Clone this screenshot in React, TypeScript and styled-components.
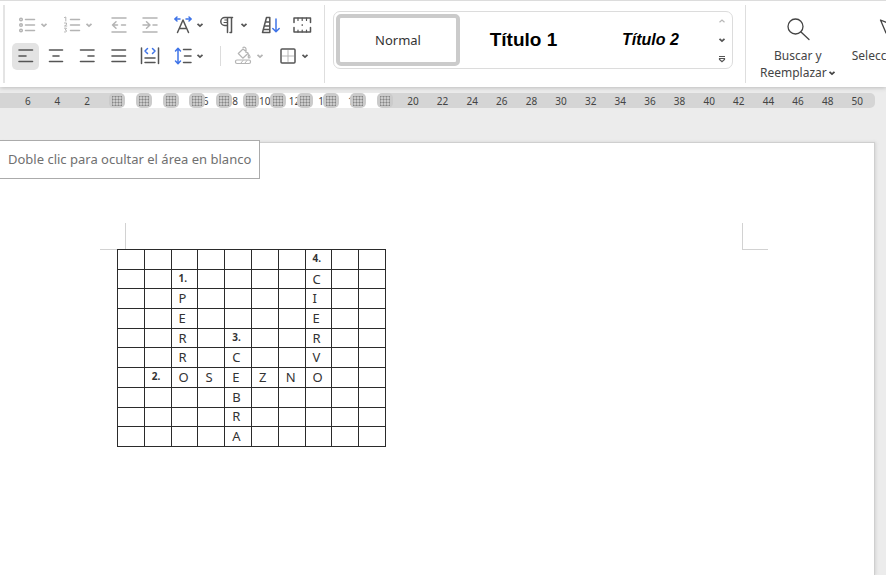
import React from "react";
import styled, { createGlobalStyle } from "styled-components";

const GlobalStyle = createGlobalStyle`
  *, *::before, *::after { box-sizing: border-box; }
  html, body, #root { height: 100%; }
  body {
    margin: 0;
    background: #ececec;
    font-family: "Noto Sans", "Open Sans", sans-serif;
    font-size: 12px;
    color: #444;
    overflow: hidden;
  }
  button { font: inherit; color: inherit; }
  svg { display: block; flex: none; }
`;

const Shell = styled.div`
  display: flex;
  flex-direction: column;
  min-height: 100%;
`;

const Ribbon = styled.header`
  display: flex;
  align-items: stretch;
  height: 87px;
  padding: 4px 0 4px 3px;
  background: #fff;
  border-top: 1px solid #dcdcdc;
  box-shadow: 0 1px 4px #bdbdbd;
  overflow: hidden;
  position: relative;
`;

const ParagraphGroup = styled.div`
  flex: none;
  width: 322px;
  display: flex;
  flex-direction: column;
  gap: 3px;
  padding: 6px 0 0 8px;
  border-left: 2px solid #e4e4e4;
  border-right: 1px solid #dedede;
`;

const ToolRow = styled.div<{ $columns: string; $indent?: boolean }>`
  display: grid;
  grid-template-columns: ${(p) => p.$columns};
  align-items: center;
  justify-items: start;
  height: 28px;
  padding-left: ${(p) => (p.$indent ? "5px" : "0")};
  margin-left: -1px;
`;

const ToolButton = styled.button<{ $active?: boolean; $faded?: boolean }>`
  display: flex;
  align-items: center;
  justify-content: center;
  gap: 3px;
  min-width: 20px;
  height: 27px;
  padding: 0 ${(p) => (p.$active ? "3px" : "0")};
  width: ${(p) => (p.$active ? "27px" : "auto")};
  border: 0;
  border-radius: 5px;
  background: ${(p) => (p.$active ? "#e3e3e3" : "transparent")};
  color: ${(p) => (p.$faded ? "#b4b4b4" : "#555")};
`;

const RowDivider = styled.span`
  width: 1px;
  height: 20px;
  background: #dcdcdc;
`;

const Gallery = styled.div`
  flex: none;
  display: flex;
  align-items: center;
  width: 400px;
  height: 58px;
  margin: 6px 12px 0 8px;
  padding: 2px;
  border: 1px solid #dcdcdc;
  border-radius: 7px;
`;

const StyleOption = styled.button<{ $selected?: boolean }>`
  flex: none;
  width: ${(p) => (p.$selected ? "124px" : "127px")};
  height: 52px;
  padding: 0;
  border: ${(p) => (p.$selected ? "4px solid #cbcbcb" : "0")};
  border-radius: 5px;
  background: #fff;
  white-space: nowrap;
`;

const NormalName = styled.span`
  font-size: 13px;
  color: #333;
`;

const HeadingName = styled.span<{ $second?: boolean }>`
  font-family: "Liberation Sans", sans-serif;
  font-weight: 700;
  font-style: ${(p) => (p.$second ? "italic" : "normal")};
  font-size: ${(p) => (p.$second ? "16px" : "19px")};
  color: #000;
`;

const Scroller = styled.div`
  display: flex;
  flex-direction: column;
  justify-content: space-between;
  align-items: center;
  width: 18px;
  height: 52px;
`;

const ScrollButton = styled.button<{ $faded?: boolean }>`
  display: grid;
  place-items: center;
  width: 14px;
  height: 14px;
  padding: 0;
  border: 0;
  background: none;
  color: ${(p) => (p.$faded ? "#b8b8b8" : "#555")};
`;

const EditGroup = styled.div`
  flex: none;
  display: flex;
  gap: 16px;
  padding: 12px 0 0 14px;
  border-left: 1px solid #dedede;
`;

const BigButton = styled.button`
  display: flex;
  flex-direction: column;
  align-items: center;
  justify-content: flex-start;
  gap: 6px;
  padding: 0;
  border: 0;
  background: none;
  line-height: 17px;
  white-space: nowrap;
`;

const CaptionLine = styled.span`
  display: flex;
  align-items: center;
  justify-content: center;
  gap: 1px;
`;

const RulerBar = styled.div`
  position: relative;
  flex: none;
  height: 15px;
  margin: 6px 11px 0 0;
  border-radius: 0 5px 5px 0;
  background: #d5d5d5;
  overflow: hidden;
`;

const TextZone = styled.div`
  position: absolute;
  inset: 0 auto 0 117px;
  width: 268px;
  background: #fff;
`;

const Scale = styled.ol`
  position: relative;
  display: flex;
  width: 859px;
  margin: 0 0 0 13px;
  padding: 0;
  list-style: none;
  font-size: 10px;
  line-height: 17px;
`;

const Mark = styled.li`
  flex: 1 1 0;
  text-align: center;
`;

const ColumnHandles = styled.div`
  position: absolute;
  inset: 0 auto 0 109px;
  width: 284px;
  display: flex;
  justify-content: space-between;
`;

const Handle = styled.span`
  display: grid;
  place-items: center;
  width: 16px;
  height: 15px;
  border-radius: 5px;
  background: #cbcbcb;
`;

const Workspace = styled.main`
  position: relative;
  flex: 1;
  display: flex;
  padding: 34px 11px 0 0;
`;

const Page = styled.article`
  flex: 1;
  padding: 80px 106px 0 100px;
  background: #fff;
  border-top: 1px solid #cfcfcf;
  border-right: 1px solid #cfcfcf;
  box-shadow: 1px 0 3px #d4d4d4;
`;

const MarginMarks = styled.div`
  display: flex;
  justify-content: space-between;
  height: 27px;
`;

const CornerMark = styled.span<{ $side: "left" | "right" }>`
  width: 26px;
  border-bottom: 1px solid #d2d2d2;
  border-left: ${(p) => (p.$side === "right" ? "1px solid #d2d2d2" : "0")};
  border-right: ${(p) => (p.$side === "left" ? "1px solid #d2d2d2" : "0")};
`;

const Crossword = styled.table`
  position: relative;
  width: 269px;
  height: 198px;
  margin: -1px 0 0 17px;
  border-collapse: collapse;
  table-layout: fixed;
  color: #333;
`;

const Cell = styled.td<{ $clue?: boolean }>`
  height: 19px;
  padding: ${(p) => (p.$clue ? "0 0 3px 7px" : "0 0 0 7px")};
  border: 1px solid #2b2b2b;
  font-size: ${(p) => (p.$clue ? "10px" : "13px")};
  font-weight: ${(p) => (p.$clue ? 700 : 400)};
  line-height: ${(p) => (p.$clue ? "14px" : "17px")};
  text-align: left;
  vertical-align: middle;
`;

const Tooltip = styled.div`
  position: absolute;
  top: 32px;
  left: 0;
  padding: 0 8px;
  background: #fff;
  border: 1px solid #ababab;
  border-left: 0;
  color: #707070;
  font-size: 13px;
  line-height: 37px;
  white-space: nowrap;
`;

const BLUE = "#3f74e8";

const Icon = ({ children, w = 20, h = 20 }: { children: React.ReactNode; w?: number; h?: number }) => (
  <svg width={w} height={h} viewBox={`0 0 ${w} ${h}`} fill="none" stroke="currentColor" strokeWidth="1.5" strokeLinecap="round" strokeLinejoin="round" aria-hidden="true">
    {children}
  </svg>
);

const Chevron = ({ up = false }: { up?: boolean }) => (
  <svg width="8" height="6" viewBox="0 0 8 6" fill="none" stroke="currentColor" strokeWidth={up ? 1.2 : 1.8} aria-hidden="true">
    <path d={up ? "M1.5 4.2 4 2l2.5 2.2" : "M1.5 1.8 4 4.1l2.5-2.3"} />
  </svg>
);

const BulletsIcon = () => (
  <Icon>
    <circle cx="4" cy="4.5" r="1.3" />
    <circle cx="4" cy="10" r="1.3" />
    <circle cx="4" cy="15.5" r="1.3" />
    <path d="M8.5 4.5h9M8.5 10h9M8.5 15.5h9" />
  </Icon>
);
const NumbersIcon = () => (
  <Icon>
    <path strokeWidth="1" d="M2.5 2.5 3.8 2v4M2.5 8h2v1.6L2.5 11h2.3M2.5 13.2h2L3.2 15c2 0 2 2.5-.7 2" />
    <path d="M8.5 4.5h9M8.5 10h9M8.5 15.5h9" />
  </Icon>
);
const IndentIcon = ({ out = false }: { out?: boolean }) => (
  <Icon>
    <path d="M3 3h14M3 17h14" />
    <path d={out ? "M7 6.8 3.5 10 7 13.2M3.5 10h5M12.5 10h4" : "M6.5 6.8 10 10l-3.5 3.2M3 10h6.5M13 10h4"} />
  </Icon>
);
const ScaleIcon = () => (
  <Icon>
    <path d="M4.5 17.5 10 5l5.5 12.5M6.3 13.5h7.4" />
    <path stroke={BLUE} d="M2 4h5M13 4h5M4 2 1.8 4 4 6M16 2l2.2 2L16 6" />
  </Icon>
);
const PilcrowIcon = () => (
  <Icon>
    <path d="M15.5 2.5H7.8a4 4 0 0 0 0 8H10M10.5 2.5v15M14.5 2.5v15h-1.5" />
    <path strokeWidth="1" d="M7.8 5h2M7 7.5h3" />
  </Icon>
);
const SortIcon = () => (
  <Icon>
    <path d="M1.5 17.5 5.5 2.5h3.3v15zM5 7h3.5M4 11h4.5M3 14.5h5.5" />
    <path stroke={BLUE} d="M15 4v12.5M11.8 13.5 15 16.8l3.2-3.3" />
  </Icon>
);
const TabsIcon = () => (
  <Icon>
    <path d="M2 7.5V3h16.500v4.500M2 12.500v4.500h16.500v-4.500" />
    <path strokeWidth="1.200" d="M6 3v2.500M10.200 3v2.500M14.500 3v2.500M6 17v-2M10.200 17v-2M14.500 17v-2M10.200 9.500v1" />
  </Icon>
);
const AlignIcon = ({ d }: { d: string }) => (
  <Icon>
    <path strokeWidth="1.6" d={d} />
  </Icon>
);
const DistributeIcon = () => (
  <Icon>
    <path d="M1.5 2v15.500M18.500 2v15.500M5 12h10M5 16.500h10" />
    <path stroke={BLUE} d="M7.500 2.500 5 5l2.500 2.500M12.500 2.500 15 5l-2.500 2.500" />
  </Icon>
);
const SpacingIcon = () => (
  <Icon>
    <path stroke={BLUE} d="M5 2.5v15M2.5 5 5 2.3 7.5 5M2.5 15 5 17.7 7.5 15" />
    <path d="M10.5 3.5H18M11.5 10H18M10.5 16.5H18" />
  </Icon>
);
const FillIcon = () => (
  <Icon>
    <path strokeWidth="1.2" d="M10 1.5a2 2 0 0 1 3 2v3M10 3 5.3 7.5l4.5 4.7 5.4-5zM15.8 8.5c2 2.5 1.2 3.5.2 3.5s-1-1.500-.2-3.500" />
    <rect x="2.5" y="14" width="15" height="3.5" rx="1.5" strokeWidth="1.2" />
    <path strokeWidth="1" d="m8 17 2-2.5M12 17l2-2.5" />
  </Icon>
);
const BordersIcon = () => (
  <Icon>
    <rect x="3" y="3" width="14" height="14" rx="1" />
    <path stroke="#b6b6b6" strokeWidth="1" d="M10 4.5v11M4.5 10h11" />
  </Icon>
);
const SearchIcon = () => (
  <Icon w={24} h={24}>
    <circle cx="9.5" cy="9.5" r="7.5" strokeWidth="1.3" />
    <path strokeWidth="1.3" d="M15 15l8 7.5" />
  </Icon>
);
const PointerIcon = () => (
  <Icon w={24} h={24}>
    <path strokeWidth="1.3" d="M8.500 3 22 8.500l-5.500 2-2.500 5.500z" />
  </Icon>
);
const GridDots = () => (
  <svg width="10" height="10" viewBox="0 0 10 10" fill="#858585" aria-hidden="true">
    {[0, 3, 6, 9].flatMap((y) => [0, 3, 6, 9].map((x) => <rect key={`${x}-${y}`} x={x} y={y} width="1" height="1" />))}
    <path fill="#a6a6a6" d="M1 0h2v1H1zM4 0h2v1H4zM7 0h2v1H7zM1 3h2v1H1zM4 3h2v1H4zM7 3h2v1H7zM1 6h2v1H1zM4 6h2v1H4zM7 6h2v1H7zM1 9h2v1H1zM4 9h2v1H4zM7 9h2v1H7z" />
    <path fill="#a6a6a6" d="M0 1h1v2H0zM3 1h1v2H3zM6 1h1v2H6zM9 1h1v2H9zM0 4h1v2H0zM3 4h1v2H3zM6 4h1v2H6zM9 4h1v2H9zM0 7h1v2H0zM3 7h1v2H3zM6 7h1v2H6zM9 7h1v2H9z" />
  </svg>
);

type Tool = { label: string; icon: React.ReactNode; menu?: boolean; faded?: boolean; active?: boolean };

const topTools: Tool[] = [
  { label: "Viñetas", icon: <BulletsIcon />, menu: true, faded: true },
  { label: "Numeración", icon: <NumbersIcon />, menu: true, faded: true },
  { label: "Disminuir sangría", icon: <IndentIcon out />, faded: true },
  { label: "Aumentar sangría", icon: <IndentIcon />, faded: true },
  { label: "Escala de caracteres", icon: <ScaleIcon />, menu: true },
  { label: "Marcas de párrafo", icon: <PilcrowIcon />, menu: true },
  { label: "Ordenar", icon: <SortIcon /> },
  { label: "Tabulaciones", icon: <TabsIcon /> },
];

const alignTools: Tool[] = [
  { label: "Alinear a la izquierda", icon: <AlignIcon d="M3 4h13.5M3 10h7M3 15.5h13.5" />, active: true },
  { label: "Centrar", icon: <AlignIcon d="M3.5 4h13M7 10h6M3.5 15.5h13" /> },
  { label: "Alinear a la derecha", icon: <AlignIcon d="M3.5 4H17M11 10h6M3.5 15.5H17" /> },
  { label: "Justificar", icon: <AlignIcon d="M3 4h13.5M3 10h13.5M3 15.5h13.5" /> },
  { label: "Distribuir", icon: <DistributeIcon /> },
  { label: "Interlineado", icon: <SpacingIcon />, menu: true },
];

const fillTools: Tool[] = [
  { label: "Sombreado", icon: <FillIcon />, menu: true, faded: true },
  { label: "Bordes", icon: <BordersIcon />, menu: true },
];

const renderTool = (t: Tool) => (
  <ToolButton key={t.label} type="button" aria-label={t.label} aria-pressed={t.active} $active={t.active} $faded={t.faded}>
    {t.icon}
    {t.menu && <Chevron />}
  </ToolButton>
);

const marks = [6, 4, 2, null, ...Array.from({ length: 25 }, (_, i) => (i + 1) * 2)];

const rows = [
  ".......4..",
  "..1....C..",
  "..P....I..",
  "..E....E..",
  "..R.3..R..",
  "..R.C..V..",
  ".2OSEZNO..",
  "....B.....",
  "....R.....",
  "....A.....",
].map((r) => r.split(""));

const handleCount = rows[0].length + 1;

export default function App() {
  return (
    <>
      <GlobalStyle />
      <Shell>
        <Ribbon>
          <ParagraphGroup>
            <ToolRow $columns="45px 47px 31px 33px 44px 44px 31px 20px" $indent>
              {topTools.map(renderTool)}
            </ToolRow>
            <ToolRow $columns="34px 31px 32px 31px 33px 47px 13px 45px 31px">
              {alignTools.map(renderTool)}
              <RowDivider />
              {fillTools.map(renderTool)}
            </ToolRow>
          </ParagraphGroup>
          <Gallery>
            <StyleOption type="button" $selected>
              <NormalName>Normal</NormalName>
            </StyleOption>
            <StyleOption type="button">
              <HeadingName>Título 1</HeadingName>
            </StyleOption>
            <StyleOption type="button">
              <HeadingName $second>Título 2</HeadingName>
            </StyleOption>
            <Scroller>
              <ScrollButton type="button" aria-label="Estilos anteriores" $faded>
                <Chevron up />
              </ScrollButton>
              <ScrollButton type="button" aria-label="Estilos siguientes">
                <Chevron />
              </ScrollButton>
              <ScrollButton type="button" aria-label="Más estilos">
                <svg width="8" height="8" viewBox="0 0 8 8" fill="none" stroke="currentColor" strokeWidth="1.2" aria-hidden="true">
                  <path d="M1 1.5h6M1.5 3.5h5v1L4 6.8 1.5 4.5z" />
                </svg>
              </ScrollButton>
            </Scroller>
          </Gallery>
          <EditGroup>
            <BigButton type="button">
              <SearchIcon />
              <span>
                <CaptionLine>Buscar y</CaptionLine>
                <CaptionLine>
                  Reemplazar
                  <Chevron />
                </CaptionLine>
              </span>
            </BigButton>
            <BigButton type="button">
              <PointerIcon />
              <CaptionLine>Seleccionar</CaptionLine>
            </BigButton>
          </EditGroup>
        </Ribbon>
        <RulerBar>
          <TextZone />
          <Scale>
            {marks.map((m, i) => (
              <Mark key={i}>{m}</Mark>
            ))}
          </Scale>
          <ColumnHandles>
            {Array.from({ length: handleCount }, (_, i) => (
              <Handle key={i}>
                <GridDots />
              </Handle>
            ))}
          </ColumnHandles>
        </RulerBar>
        <Workspace>
          <Page>
            <MarginMarks>
              <CornerMark $side="left" />
              <CornerMark $side="right" />
            </MarginMarks>
            <Crossword>
              <tbody>
                {rows.map((row, r) => (
                  <tr key={r}>
                    {row.map((ch, c) => {
                      const clue = /\d/.test(ch);
                      return (
                        <Cell key={c} $clue={clue}>
                          {ch === "." ? "" : clue ? `${ch}.` : ch}
                        </Cell>
                      );
                    })}
                  </tr>
                ))}
              </tbody>
            </Crossword>
          </Page>
          <Tooltip role="tooltip">Doble clic para ocultar el área en blanco</Tooltip>
        </Workspace>
      </Shell>
    </>
  );
}
